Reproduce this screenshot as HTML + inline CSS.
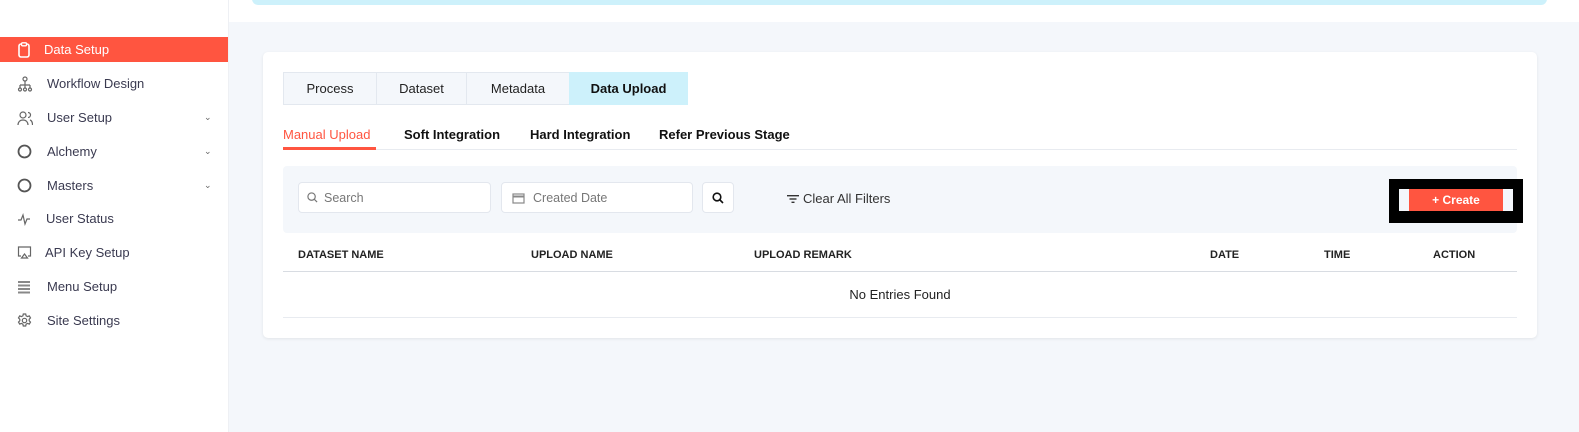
<!DOCTYPE html>
<html><head><style>
*{margin:0;padding:0;box-sizing:border-box}
body{width:1579px;height:432px;overflow:hidden;background:#f4f7fb;font-family:"Liberation Sans",sans-serif;position:relative;font-size:13px;color:#222}
.abs{position:absolute}
.side{left:0;top:0;width:229px;height:432px;background:#fff;border-right:1px solid #eef0f4}
.item{position:absolute;left:0;width:228px;height:25px;display:flex;align-items:center;font-size:13px;color:#3a3a50}
.item svg{position:absolute;left:17px}
.item span{position:absolute}
.chev{position:absolute;left:204px;font-size:9px;color:#666}
.tab{position:absolute;top:72px;height:33px;border:1px solid #e3e8ef;background:#f4f7fb;font-size:13px;display:flex;align-items:center;justify-content:center;color:#222}
.sub{position:absolute;top:127px;font-size:13px;font-weight:bold;color:#111}
.inp{position:absolute;top:182px;height:31px;background:#fff;border:1px solid #e3e7ee;border-radius:4px;color:#777;font-size:12.5px;display:flex;align-items:center}
.th{position:absolute;top:249px;font-size:11px;font-weight:bold;color:#222}
</style></head><body>
<div class="abs" style="left:229px;top:0;width:1350px;height:22px;background:#fff"></div>
<div class="abs" style="left:252px;top:-10px;width:1295px;height:15px;background:#cdf1fb;border-radius:6px"></div>
<div class="abs side"></div>
<div class="item" style="top:37px;background:#ff5540;color:#fff"><svg width="14" height="16" viewBox="0 0 14 16"><rect x="2" y="2" width="10" height="13" rx="2" fill="none" stroke="#fff" stroke-width="1.6"/><rect x="4.5" y="0.8" width="5" height="3" rx="1" fill="#ff5540" stroke="#fff" stroke-width="1.4"/></svg><span style="left:44px">Data Setup</span></div>
<div class="item" style="top:71px"><svg width="16" height="16" viewBox="0 0 16 16" fill="none" stroke="#666" stroke-width="1.2"><circle cx="8" cy="3" r="2"/><path d="M8 5v4M3 9h10M3 9v3M8 9v3M13 9v3"/><circle cx="3" cy="13.5" r="1.5"/><circle cx="8" cy="13.5" r="1.5"/><circle cx="13" cy="13.5" r="1.5"/></svg><span style="left:47px">Workflow Design</span></div>
<div class="item" style="top:105px"><svg width="16" height="16" viewBox="0 0 16 16" fill="none" stroke="#666" stroke-width="1.2"><circle cx="6" cy="5" r="3"/><path d="M1 15c0-3 2-5 5-5s5 2 5 5M11 2.5a2.5 2.5 0 010 5M13 10c1.5.5 2.5 2 2.5 5"/></svg><span style="left:47px">User Setup</span><span class="chev">&#8964;</span></div>
<div class="item" style="top:139px"><svg width="15" height="15" viewBox="0 0 15 15"><circle cx="7.5" cy="7.5" r="6" fill="none" stroke="#555" stroke-width="1.8"/></svg><span style="left:47px">Alchemy</span><span class="chev">&#8964;</span></div>
<div class="item" style="top:173px"><svg width="15" height="15" viewBox="0 0 15 15"><circle cx="7.5" cy="7.5" r="6" fill="none" stroke="#555" stroke-width="1.8"/></svg><span style="left:47px">Masters</span><span class="chev">&#8964;</span></div>
<div class="item" style="top:206px"><svg width="14" height="14" viewBox="0 0 14 14" fill="none" stroke="#666" stroke-width="1.2"><path d="M1 8h3l2-5 2 9 2-5h3"/></svg><span style="left:46px">User Status</span></div>
<div class="item" style="top:240px"><svg width="15" height="15" viewBox="0 0 15 15" fill="none" stroke="#666" stroke-width="1.2"><path d="M4 11H1.5V2h12v9H11"/><path d="M7.5 9l3 4h-6z"/></svg><span style="left:45px">API Key Setup</span></div>
<div class="item" style="top:274px"><svg width="14" height="14" viewBox="0 0 14 14" fill="#888"><rect x="1" y="1" width="12" height="2"/><rect x="1" y="4.5" width="12" height="2"/><rect x="1" y="8" width="12" height="2"/><rect x="1" y="11.5" width="12" height="2"/></svg><span style="left:47px">Menu Setup</span></div>
<div class="item" style="top:308px"><svg width="15" height="15" viewBox="0 0 15 15" fill="none" stroke="#666" stroke-width="1.2"><circle cx="7.5" cy="7.5" r="2.2"/><path d="M6.3 1h2.4l.4 1.8 1.5.8 1.7-.7 1.2 2-1.3 1.3v1.6l1.3 1.3-1.2 2-1.7-.7-1.5.8-.4 1.8H6.3l-.4-1.8-1.5-.8-1.7.7-1.2-2 1.3-1.3V6.2L1.5 4.9l1.2-2 1.7.7 1.5-.8z"/></svg><span style="left:47px">Site Settings</span></div>

<div class="abs" style="left:263px;top:52px;width:1274px;height:286px;background:#fff;border-radius:5px;box-shadow:0 1px 3px rgba(0,0,0,.08)"></div>
<div class="tab" style="left:283px;width:94px">Process</div>
<div class="tab" style="left:376px;width:91px">Dataset</div>
<div class="tab" style="left:466px;width:104px">Metadata</div>
<div class="tab" style="left:569px;width:119px;background:#cdf1fb;border-color:#cdf1fb;font-weight:bold;color:#111">Data Upload</div>
<div class="sub" style="left:283px;color:#ff5540;font-weight:normal">Manual Upload</div>
<div class="sub" style="left:404px">Soft Integration</div>
<div class="sub" style="left:530px">Hard Integration</div>
<div class="sub" style="left:659px">Refer Previous Stage</div>
<div class="abs" style="left:283px;top:149px;width:1234px;height:1px;background:#e8ebf0"></div>
<div class="abs" style="left:283px;top:147px;width:93px;height:3px;background:#ff5540"></div>
<div class="abs" style="left:283px;top:166px;width:1234px;height:67px;background:#f4f7fb;border-radius:4px"></div>
<div class="inp" style="left:298px;width:193px"><svg style="margin:0 6px 0 8px" width="11" height="11" viewBox="0 0 12 12" fill="none" stroke="#777" stroke-width="1.3"><circle cx="5" cy="5" r="4"/><path d="M8 8l3 3"/></svg>Search</div>
<div class="inp" style="left:501px;width:192px"><svg style="margin:0 8px 0 10px" width="13" height="12" viewBox="0 0 13 12" fill="none" stroke="#888" stroke-width="1.2"><rect x="1" y="2" width="11" height="9"/><path d="M1 4.5h11" stroke-width="2"/></svg>Created Date</div>
<div class="inp" style="left:702px;width:32px;justify-content:center"><svg width="12" height="12" viewBox="0 0 12 12" fill="none" stroke="#111" stroke-width="1.6"><circle cx="5" cy="5" r="3.8"/><path d="M8 8l3 3"/></svg></div>
<div class="abs" style="left:787px;top:191px;font-size:13px;color:#333;display:flex;align-items:center"><svg width="12" height="10" viewBox="0 0 12 10" fill="#333" style="margin-right:4px"><rect x="0" y="1" width="12" height="1.4"/><rect x="2.5" y="4.3" width="7" height="1.4"/><rect x="4.5" y="7.6" width="3" height="1.4"/></svg>Clear All Filters</div>
<div class="abs" style="left:1389px;top:179px;width:134px;height:44px;background:#000"></div>
<div class="abs" style="left:1399px;top:189px;width:114px;height:22px;background:#f4f7fb"></div>
<div class="abs" style="left:1409px;top:189px;width:94px;height:22px;background:#ff5540;color:#fff;font-weight:bold;font-size:12px;display:flex;align-items:center;justify-content:center">+ Create</div>
<div class="th" style="left:298px">DATASET NAME</div>
<div class="th" style="left:531px">UPLOAD NAME</div>
<div class="th" style="left:754px">UPLOAD REMARK</div>
<div class="th" style="left:1210px">DATE</div>
<div class="th" style="left:1324px">TIME</div>
<div class="th" style="left:1433px">ACTION</div>
<div class="abs" style="left:283px;top:271px;width:1234px;height:1px;background:#d8dce2"></div>
<div class="abs" style="left:283px;top:287px;width:1234px;text-align:center;font-size:13px;color:#222">No Entries Found</div>
<div class="abs" style="left:283px;top:317px;width:1234px;height:1px;background:#e8ebf0"></div>
</body></html>
